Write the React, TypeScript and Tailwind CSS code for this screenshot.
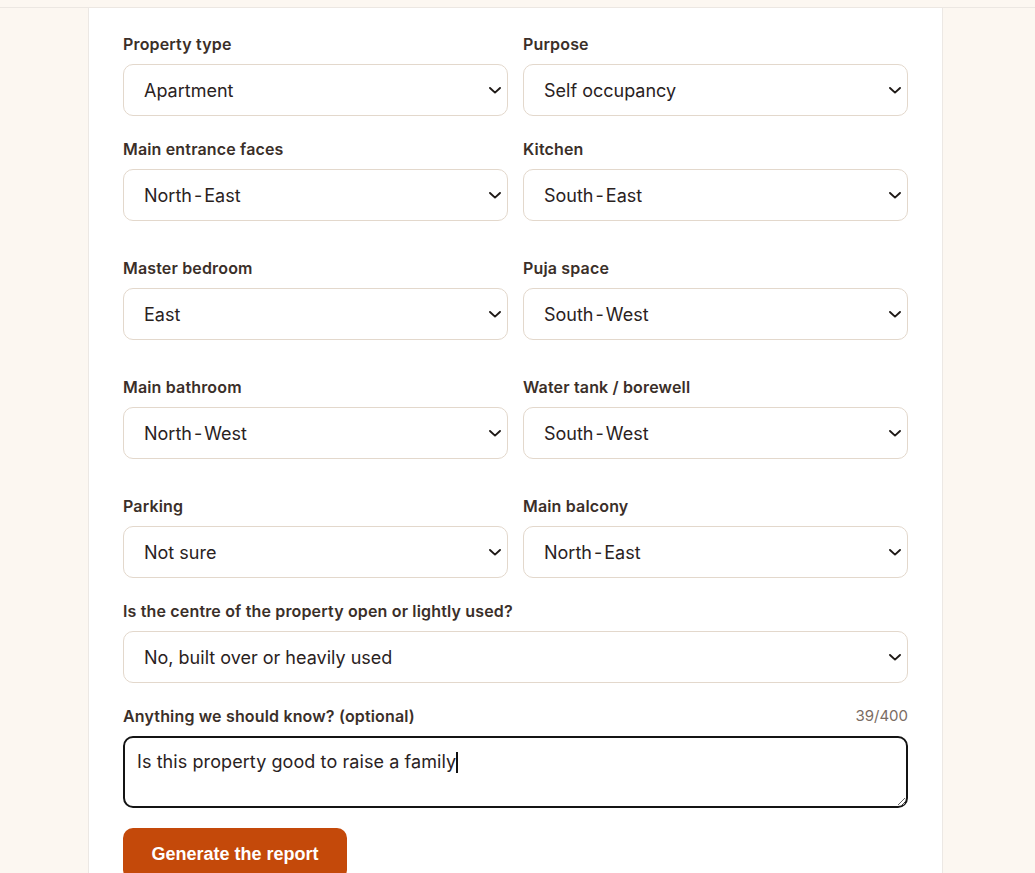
import React from "react";

function Chevron() {
  return (
    <svg width="12" height="7" viewBox="0 0 12 7" fill="none" className="shrink-0">
      <path d="M1 1 L6 5.6 L11 1" stroke="#1f1a17" strokeWidth="1.9" strokeLinecap="round" strokeLinejoin="round" />
    </svg>
  );
}

function Dir({ value }: { value: string }) {
  const parts = value.split("-");
  if (parts.length < 2) return <>{value}</>;
  return (
    <>
      {parts[0]}
      <span className="mx-[2px]">-</span>
      {parts[1]}
    </>
  );
}

function Field({ label, value }: { label: string; value: string }) {
  return (
    <div className="flex flex-col">
      <div className="text-[16px] leading-5 font-semibold tracking-[0.01em] text-[#3b2f29] mb-[10px]">{label}</div>
      <div className="h-[52px] rounded-[10px] border border-[#e3d8cc] bg-white flex items-center justify-between pl-[20px] pr-[6px]">
        <span className="text-[18px] text-[#2a221e]">
          <Dir value={value} />
        </span>
        <Chevron />
      </div>
    </div>
  );
}

export default function App() {
  return (
    <div className="min-h-screen bg-[#fcf7f1] font-['Inter',sans-serif]">
      <div className="h-[8px] border-b border-[#ece7e2]" />
      <div className="ml-[88px] w-[855px] min-h-[865px] bg-white border-x border-[#ece8e4] px-[34px] pt-[26px] pb-10">
        <div className="grid grid-cols-2 gap-x-[15px] gap-y-[23px]">
          <Field label="Property type" value="Apartment" />
          <Field label="Purpose" value="Self occupancy" />
          <Field label="Main entrance faces" value="North-East" />
          <Field label="Kitchen" value="South-East" />
        </div>
        <div className="grid grid-cols-2 gap-x-[15px] gap-y-[37px] mt-[37px]">
          <Field label="Master bedroom" value="East" />
          <Field label="Puja space" value="South-West" />
          <Field label="Main bathroom" value="North-West" />
          <Field label="Water tank / borewell" value="South-West" />
          <Field label="Parking" value="Not sure" />
          <Field label="Main balcony" value="North-East" />
        </div>
        <div className="mt-[23px]">
          <Field label="Is the centre of the property open or lightly used?" value="No, built over or heavily used" />
        </div>
        <div className="mt-[23px] flex flex-col">
          <div className="flex items-center justify-between mb-[10px] leading-5">
            <span className="text-[16px] font-semibold tracking-[0.01em] text-[#3b2f29]">Anything we should know? (optional)</span>
            <span className="text-[15px] text-[#7a6c63]">39/400</span>
          </div>
          <div className="w-full h-[72px] rounded-[10px] border-2 border-[#141414] bg-white px-[12px] pt-[12px] text-[18px] leading-6 tracking-[0.08px] text-[#2a221e] resize-y overflow-auto">
            Is this property good to raise a family
            <span className="inline-block w-[1.5px] h-[21px] bg-[#111] align-[-5px]" />
          </div>
        </div>
        <button className="mt-[20px] h-[52px] w-[224px] rounded-[10px] bg-[#c4490a] text-white text-[18px] font-bold font-['Liberation_Sans',Arial,sans-serif]">
          Generate the report
        </button>
      </div>
    </div>
  );
}
